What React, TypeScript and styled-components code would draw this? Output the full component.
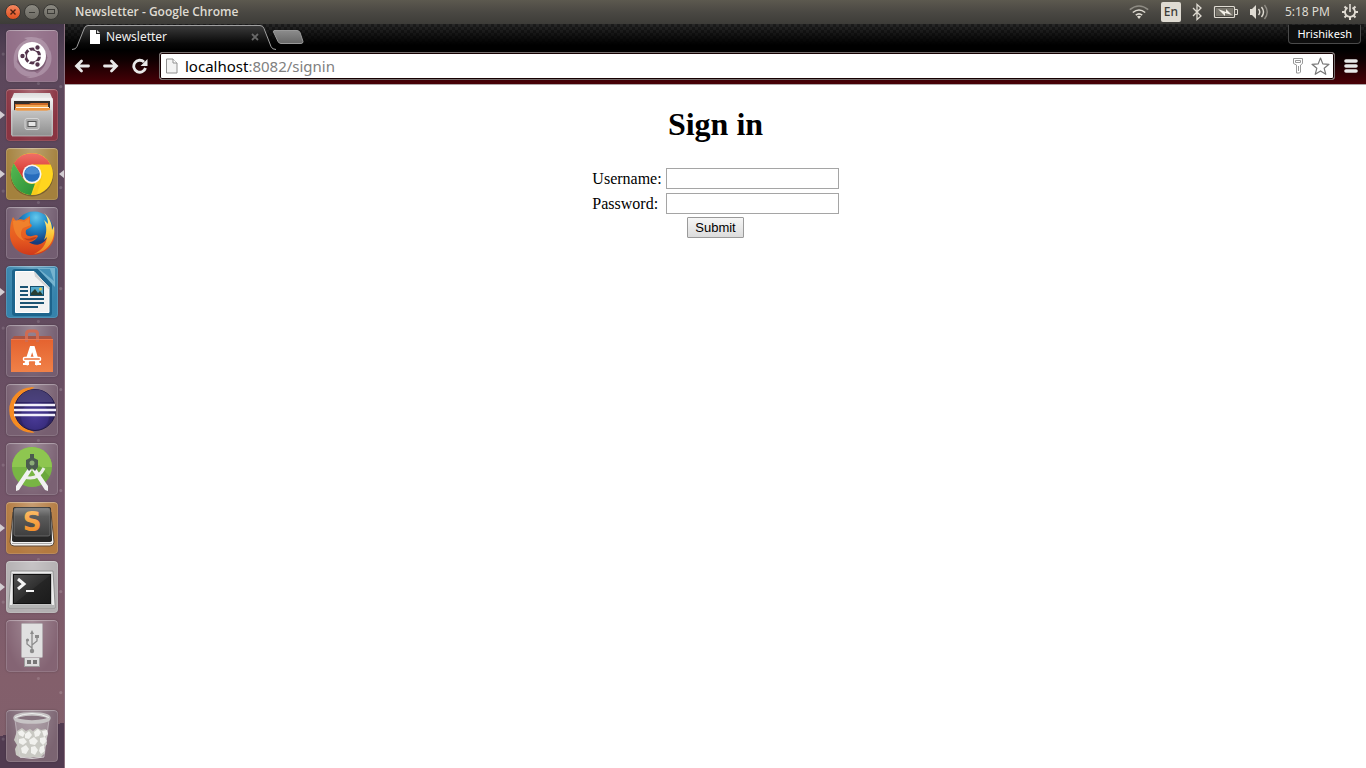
import React from 'react';
import styled, { createGlobalStyle, css } from 'styled-components';

const GlobalStyle = createGlobalStyle`
  * { box-sizing: border-box; }
  body { margin: 0; background: #fff; }
  button { font: inherit; cursor: default; }
`;

const uiFont = css`font-family: 'Noto Sans', 'Open Sans', sans-serif;`;

const Desktop = styled.div`
  display: flex;
  flex-direction: column;
  min-height: 100vh;
`;

/* ---------- top panel ---------- */
const Panel = styled.header`
  ${uiFont}
  display: flex;
  align-items: center;
  height: 24px;
  padding: 0 8px 0 5px;
  color: #dfdbd2;
  font-size: 12px;
  line-height: 16px;
  background: linear-gradient(#5c594f, #4a4843 50%, #3d3c38);
`;

const WindowButtons = styled.div`
  display: flex;
  gap: 3px;
`;

const WindowButton = styled.button<{ $close?: boolean }>`
  display: block;
  width: 16px;
  height: 16px;
  padding: 0;
  border: 1px solid #3a3935;
  border-radius: 50%;
  background: ${p => (p.$close ? 'linear-gradient(#f58860, #e0501f)' : 'linear-gradient(#8c8a82, #6b6962)')};
  svg { display: block; width: 14px; height: 14px; }
`;

const WindowTitle = styled.div`
  flex: 1;
  margin-left: 16px;
  font-family: 'Open Sans', 'Noto Sans', sans-serif;
  font-weight: 600;
  font-size: 12px;
`;

const Indicators = styled.div`
  display: flex;
  align-items: center;
  gap: 10px;
  svg { display: block; }
`;

const Keyboard = styled.span`
  width: 20px;
  height: 20px;
  margin-left: 2px;
  border-radius: 2px;
  background: #dfdbd2;
  color: #3c3b37;
  font-size: 12px;
  font-weight: 500;
  line-height: 20px;
  text-align: center;
`;

const Clock = styled.time`
  margin: 0 2px 0 6px;
  font-size: 12px;
`;

/* ---------- launcher ---------- */
const Workspace = styled.div`
  display: flex;
  flex: 1;
`;

const Launcher = styled.nav`
  display: flex;
  flex-direction: column;
  gap: 7px;
  width: 65px;
  padding: 6px 0;
  border-right: 1px solid #8c7180;
  background:
    radial-gradient(circle at 5% 22%, #ffffff20 1px, transparent 2px) 0 0 / 64px 137px,
    radial-gradient(circle at 95% 62%, #ffffff28 1px, transparent 2px) 0 0 / 64px 101px,
    radial-gradient(circle at 60% 50%, #ffffff20 1px, transparent 2px) 0 0 / 64px 119px,
    linear-gradient(168deg, transparent 94%, #513b50 94%),
    linear-gradient(#44374a, #5c475b 6%, #5f495d 35%, #75566a 65%, #835f6b 88%, #80606c);
`;

const Slot = styled.div<{ $last?: boolean }>`
  display: flex;
  align-items: center;
  ${p => p.$last && 'margin-top: auto;'}
`;

const Pip = styled.span<{ $side: 'left' | 'right'; $on?: boolean }>`
  border: solid transparent;
  border-width: 4px 0;
  ${p => (p.$side === 'left' ? 'border-left: 5px solid' : 'border-right: 5px solid')};
  ${p => (p.$side === 'left' ? 'margin-right: 1px' : 'margin-left: 1px')};
  ${p => (p.$side === 'left' ? 'border-left-color' : 'border-right-color')}: ${p => (p.$on ? '#d3cdd2' : 'transparent')};
`;

const Tile = styled.button<{ $tone: string }>`
  display: block;
  width: 52px;
  height: 52px;
  padding: 0;
  border: 0;
  border-radius: 4px;
  background: radial-gradient(ellipse at 50% 0, #ffffff48, #ffffff08 75%), ${p => p.$tone};
  box-shadow: inset 0 0 0 1px #ffffff20, inset 0 1px 1px #ffffff40, 0 0 2px #0004;
  svg { display: block; width: 52px; height: 52px; }
`;

/* ---------- browser ---------- */
const Browser = styled.main`
  display: flex;
  flex: 1;
  flex-direction: column;
  min-width: 0;
`;

const TabStrip = styled.div`
  ${uiFont}
  display: flex;
  align-items: flex-start;
  height: 26px;
  padding: 1px 5px 0 7px;
  background:
    linear-gradient(#0000, #000 80%),
    repeating-conic-gradient(#282828 0 25%, #1b1b1b 0 50%) 0 0 / 6px 6px;
`;

const Tab = styled.div`
  display: grid;
  width: 204px;
  height: 25px;
  > * { grid-area: 1 / 1; }
`;

const TabContent = styled.div`
  display: flex;
  align-items: center;
  height: 23px;
  padding: 0 17px 0 17px;
  color: #eee;
  font-size: 12px;
  line-height: 16px;
  span { flex: 1; margin-left: 5px; }
`;

const PlainButton = styled.button`
  display: block;
  padding: 0;
  border: 0;
  background: none;
  svg { display: block; }
`;

const NewTab = styled(PlainButton)`
  margin: 4px auto 0 -4px;
`;

const Profile = styled.button`
  ${uiFont}
  && { font-size: 11px; }
  height: 19px;
  padding: 0 8px 1px;
  border: 1px solid #4a4a4a;
  border-top: 0;
  border-radius: 0 0 4px 4px;
  background: #0e0e0e;
  color: #fff;
  line-height: 16px;
`;

const Toolbar = styled.div`
  display: flex;
  align-items: center;
  height: 35px;
  padding: 0 8px 2px 9px;
  gap: 13px;
  border-bottom: 1px solid #aca5a6;
  background: linear-gradient(#000, #100001 30%, #4a0007);
`;

const Omnibox = styled.div`
  ${uiFont}
  display: flex;
  flex: 1;
  align-items: center;
  height: 28px;
  margin: 0 -4px 0 -2px;
  padding: 0 4px 0 5px;
  border: 1px solid #77706f;
  border-radius: 3px;
  background: #fff;
  box-shadow: inset 0 0 0 1px #160102;
`;

const Address = styled.div`
  flex: 1;
  margin-left: 6px;
  color: #808080;
  font-size: 15px;
  line-height: 22px;
  b { color: #000; font-weight: 400; }
`;

const OmniActions = styled.div`
  display: flex;
  align-items: center;
  gap: 7px;
`;

/* ---------- page ---------- */
const Page = styled.section`
  flex: 1;
  background: #fff;
  color: #000;
  font: 16px/18px 'Liberation Serif', serif;
  text-align: center;
`;

const Heading = styled.h1`
  margin: 21px 0 25px;
  font-size: 32px;
  line-height: 37px;
`;

const SignInForm = styled.form`
  display: flex;
  flex-direction: column;
  align-items: center;
  gap: 3px;
`;

const Fields = styled.div`
  display: grid;
  grid-template-columns: auto 173px;
  align-items: center;
  gap: 4px;
  text-align: left;
`;

const TextInput = styled.input`
  width: 100%;
  height: 21px;
  padding: 1px 2px;
  border: 1px solid #a5a5a5;
  border-radius: 0;
  background: #fff;
  font: 13px/16px 'Liberation Sans', sans-serif;
`;

const Submit = styled.button`
  width: 57px;
  height: 21px;
  padding: 0;
  border: 1px solid #9a9a9a;
  border-radius: 1px;
  background: linear-gradient(#f6f6f6, #dcdcdc);
  && { font: 13px/16px 'Liberation Sans', sans-serif; }
  color: #000;
`;

/* ---------- launcher drawings ---------- */
const Dash = () => (
  <svg viewBox="0 0 52 52">
    <rect x="1" y="1" width="50" height="50" rx="3" fill="#94708a" fillOpacity=".7" />
    <path d="M9 39C3 17 18 5 38 9 25 9 14 14 12 26zM18 8c19-5 31 10 25 28-1-13-6-21-18-24zM44 20c6 16-6 29-24 28 10-2 18-8 20-16zM33 45C19 51 6 41 8 27c4 9 10 13 20 14z" fill="#eadfe8" fillOpacity=".28" />
    <circle cx="26" cy="27.500" r="14.500" fill="#4a314650" />
    <circle cx="26" cy="26" r="14" fill="#fff" />
    <circle cx="26.500" cy="26" r="7" fill="none" stroke="#54354d" strokeWidth="3" />
    <path d="M35.500 26h-5M22 18.500l3 4M22 33.500l3-4" stroke="#fff" strokeWidth="1.500" />
    <g fill="#54354d" stroke="#fff" strokeWidth="1.200">
      <circle cx="16.500" cy="26" r="2.800" /><circle cx="31.500" cy="17.500" r="2.800" /><circle cx="31.500" cy="34.500" r="2.800" />
    </g>
  </svg>
);

const Files = () => (
  <svg viewBox="0 0 52 52">
    <defs>
      <linearGradient id="fb" x2="0" y2="1"><stop stopColor="#dcdcdc" /><stop offset=".15" stopColor="#eee" /><stop offset="1" stopColor="#a5a5a5" /></linearGradient>
      <linearGradient id="ff" x2="0" y2="1"><stop stopColor="#c6c6c6" /><stop offset="1" stopColor="#8e8e8e" /></linearGradient>
    </defs>
    <path d="M8 4h36l3 7v35H5V11z" fill="url(#fb)" />
    <path d="M5 10h42" stroke="#fafafa" />
    <path d="M8 12h36v11H8z" fill="#332e2b" />
    <path d="M9 15h14l2-1h17v9H9z" fill="#cb6928" />
    <path d="M10 16h32v2H10z" fill="#f2a650" /><path d="M10 18h33v1H10z" fill="#fff3e2" /><path d="M9 19h35v3H9z" fill="#ee9640" />
    <path d="M7 21l4 1h30l4-1 1 1v25H6V22z" fill="url(#ff)" stroke="#c9c9c9" strokeWidth=".7" />
    <rect x="19" y="29.500" width="14" height="11" rx="2" fill="#aaa" stroke="#d5d5d5" />
    <rect x="22" y="32.500" width="8" height="5" fill="#e5e5e5" stroke="#555" />
  </svg>
);

const Chrome = () => (
  <svg viewBox="0 0 52 52">
    <defs>
      <linearGradient id="cr" x2="0" y2="1"><stop stopColor="#f07067" /><stop offset="1" stopColor="#cf2c26" /></linearGradient>
      <linearGradient id="cg" x2="1" y2="1"><stop stopColor="#56b752" /><stop offset="1" stopColor="#2b9137" /></linearGradient>
    </defs>
    <circle cx="26" cy="27" r="21.500" fill="#0004" />
    <circle cx="26" cy="26" r="21" fill="#ffd51e" />
    <path d="M7.800 15.500A21 21 0 0 1 44.400 16.500H26L17.500 31z" fill="url(#cr)" />
    <path d="M7.800 15.500 17.500 31A10 10 0 0 0 29 35.500L25 47A21 21 0 0 1 7.800 15.500" fill="url(#cg)" />
    <path d="M34 31l-9 16q3 0 6-1l6-20z" fill="#e9b813" fillOpacity=".35" />
    <circle cx="26" cy="26" r="9.500" fill="#f5f5f5" /><circle cx="26" cy="26" r="7.800" fill="#286dbd" />
    <path d="M18.700 25a7.400 7.400 0 0 1 14.600 0q-7 3-14.600 0" fill="#4a8bd0" />
  </svg>
);

const Firefox = () => (
  <svg viewBox="0 0 52 52">
    <defs>
      <radialGradient id="fg" cx=".55" cy=".15" r=".8"><stop stopColor="#64c8ec" /><stop offset=".35" stopColor="#218ccb" /><stop offset=".8" stopColor="#153c7e" /></radialGradient>
      <linearGradient id="fx" x2="0" y2="1"><stop stopColor="#ed7425" /><stop offset=".6" stopColor="#e65a20" /><stop offset="1" stopColor="#cf3a1b" /></linearGradient>
      <linearGradient id="fy" x2="0" y2="1"><stop stopColor="#fff6a6" /><stop offset=".5" stopColor="#fbc83a" /><stop offset="1" stopColor="#ee7925" /></linearGradient>
    </defs>
    <circle cx="28" cy="24" r="19.500" fill="url(#fg)" />
    <path d="M7 10l3 4c3-2 5-2 8-1l6-4v7c1 2 3 2 1 4l-5 3c-1 4 1 7 6 6 2 0 4-2 6 0-2 4-6 6-9 6 6 5 14 3 18-4l3-2 4-6c3 13-8 25-22 25C12 48 3 38 4 25 4 19 5 14 7 10z" fill="url(#fx)" />
    <path d="M38 6c6 5 8 11 8 17l2-4c2 14-6 26-20 28 8-4 12-9 13-17l-3 3c3-8 3-13 0-20l4 4c0-4-1-8-4-11z" fill="url(#fy)" />
    <path d="M7 14c4-1 9 0 11 1l5-4v5l2 2-8 3c-3 4-3 9 2 13-9-3-12-11-12-20z" fill="#f28a31" fillOpacity=".7" />
    <path d="M18 31c5 2 8-1 13-1-3 4-9 5-13 1z" fill="#b8401e" />
  </svg>
);

const Writer = () => (
  <svg viewBox="0 0 52 52">
    <rect x="6" y="3" width="40" height="47" rx="3" fill="#1d648c" />
    <path d="M31 2h18v19z" fill="#75b3cf" /><path d="M33 3h11l4 12z" fill="#438fb6" />
    <path d="M9.500 5.500H28l15 16v25H9.500z" fill="#f2f2f2" stroke="#fff" /><path d="M28 5.500l1 5 14 13v-2z" fill="#d2d2d2" />
    <g stroke="#1b5373" strokeWidth="2"><path d="M14 21h8M14 25h8M14 29h8M14 33h24M14 37h24M14 41h18" /></g>
    <rect x="24" y="20" width="14" height="10" fill="#15506f" /><rect x="25" y="21" width="12" height="8" fill="#56aacb" />
    <path d="M25 29v-2l4-4 3 4 2-2 3 4z" fill="#283e32" /><circle cx="34.500" cy="23" r="1.500" fill="#e1c64b" />
  </svg>
);

const Software = () => (
  <svg viewBox="0 0 52 52">
    <defs><linearGradient id="sw" x2="0" y2="1"><stop stopColor="#e4622f" /><stop offset="1" stopColor="#f08148" /></linearGradient></defs>
    <path d="M8 11h37l2 4H5z" fill="#a95543" /><path d="M5 14h42v33H5z" fill="url(#sw)" />
    <path d="M20.500 17V9q0-3 3-3h5q3 0 3 3v8" fill="none" stroke="#cf6b52" strokeWidth="3" />
    <path d="M5 14.500h42" stroke="#eb7950" />
    <path d="M20 40l5.500-17h1.500L32 40" fill="none" stroke="#fff" strokeWidth="4" />
    <path d="M17 39h6M29 39h6" stroke="#fff" strokeWidth="2" />
    <rect x="17.500" y="32.500" width="17" height="3" rx="1" fill="#ed7039" stroke="#fff" strokeWidth="1.400" />
  </svg>
);

const Eclipse = () => (
  <svg viewBox="0 0 52 52">
    <defs><radialGradient id="ec" cx=".5" cy=".65" r=".65"><stop stopColor="#4b3c99" /><stop offset=".5" stopColor="#3a2e80" /><stop offset=".55" stopColor="#30256a" /><stop offset="1" stopColor="#251c50" /></radialGradient></defs>
    <path d="M26 4A22 22 0 0 0 26 48 26 26 0 0 1 26 4z" fill="#f58b22" stroke="#f58b22" strokeWidth="1.500" />
    <circle cx="29" cy="26" r="20.500" fill="url(#ec)" stroke="#201849" />
    <path d="M10.500 18a20 20 0 0 1 37 0z" fill="#655d91" fillOpacity=".5" />
    <path d="M8 21h41M8 26h42M8 31h41" stroke="#f1effa" strokeWidth="2.600" />
  </svg>
);

const Studio = () => (
  <svg viewBox="0 0 52 52">
    <circle cx="26" cy="24" r="20" fill="#78b544" /><path d="M6 24a20 20 0 0 1 40 0z" fill="#8ec650" />
    <path d="M28 26l9 16 7-8-11-12z" fill="#4f8d2b" fillOpacity=".35" />
    <path d="M18 34q14 4 20-9" fill="none" stroke="#eceee9" strokeWidth="3" />
    <path d="M23 24 10 43v5l3-1 13-20zM29 24l13 19v5l-3-1-13-20z" fill="#f1f1f1" />
    <path d="M24 11h4v4l4 2v7l-3 4-3-3-3 3-3-4v-7l4-2z" fill="#4b5a4f" /><circle cx="26" cy="20" r="2.500" fill="#8cac78" />
  </svg>
);

const SublimeMark = styled.text`
  font: 700 26px 'DejaVu Sans', sans-serif;
`;

const Sublime = () => (
  <svg viewBox="0 0 52 52">
    <defs>
      <linearGradient id="sb" x2="0" y2="1"><stop stopColor="#888" /><stop offset=".3" stopColor="#5c5c5c" /><stop offset="1" stopColor="#3e3e3e" /></linearGradient>
      <linearGradient id="so" x2="0" y2="1"><stop stopColor="#ffc46f" /><stop offset="1" stopColor="#ee811a" /></linearGradient>
    </defs>
    <path d="M7 10h38l3 30q0 4-4 4H8q-4 0-4-4z" fill="#f2f2f2" stroke="#5e4936" /><path d="M6 41h40v1H6z" fill="#a9a9a9" />
    <path d="M9 5h34q2 0 2 2l1 31q0 2-3 2H9q-3 0-3-2L7 7q0-2 2-2z" fill="#262626" />
    <rect x="8" y="6" width="36" height="28" rx="2" fill="url(#sb)" stroke="#797979" strokeWidth=".7" />
    <SublimeMark x="26" y="29" textAnchor="middle" fill="url(#so)">S</SublimeMark>
  </svg>
);

const Terminal = () => (
  <svg viewBox="0 0 52 52">
    <defs><linearGradient id="tm" x2="1" y2="1"><stop stopColor="#525252" /><stop offset=".5" stopColor="#303030" /><stop offset=".52" stopColor="#252525" /><stop offset="1" stopColor="#1b1b1b" /></linearGradient></defs>
    <path d="M5 10h42l2 33v4H3v-4z" fill="#ececec" stroke="#909090" /><path d="M3.500 44h45v3h-45z" fill="#b4b4b4" />
    <rect x="6" y="12" width="40" height="32" fill="#c5c5c5" /><rect x="7.500" y="13.500" width="37" height="29" fill="url(#tm)" stroke="#111" />
    <path d="M12 18l6 5-6 5" fill="none" stroke="#f4f4f4" strokeWidth="3" /><path d="M20 30h8" stroke="#f4f4f4" strokeWidth="2" />
  </svg>
);

const Usb = () => (
  <svg viewBox="0 0 52 52">
    <rect x="18.500" y="37.500" width="15" height="9" fill="#ddd" stroke="#9b9b9b" /><path d="M21 40h4v4h-4zM27 40h4v4h-4z" fill="#777" />
    <rect x="15.500" y="3.500" width="21" height="34" rx="1" fill="#e0e0e0" stroke="#b5aeb2" />
    <g fill="none" stroke="#8b8b8b" strokeWidth="1.300"><path d="M26 13v17M26 28l-5-4v-4M26 25l5-4v-4" /></g>
    <path d="M26 10l2 4h-4zM29 15h4v3h-4z" fill="#8b8b8b" /><circle cx="21.500" cy="20" r="1.600" fill="#8b8b8b" /><circle cx="26" cy="31" r="2.200" fill="#8b8b8b" />
  </svg>
);

const Trash = () => (
  <svg viewBox="0 0 52 52">
    <path d="M9 9l5 38q12 3 24 0l5-38z" fill="#e5e3e4" fillOpacity=".25" />
    <path d="M11 21l5-3 4 3 4-2 3 2 4-3 4 2 5-1 2 5-2 6 1 4-3 4 1 5-5 5-6-1-4 1-5-1-4 1-5-3-1-6 2-4-3-5z" fill="#c9c9c3" />
    <path d="M12 22l4-2 3 3-2 4-4-2zM19 24l4-3 3 4-3 4-4-1zM28 22l4-3 3 3-2 4-4 1zM36 21l5-1 1 4-4 3zM13 29l5-1 3 4-4 3-4-2zM23 30l5-3 4 4-3 4-5-1zM34 28l5-1 2 4-4 4-3-3zM15 38l5-3 3 4-3 5-4-1zM25 37l4-1 3 4-3 5-4-2zM34 37l4-2 1 6-4 3-2-3z" fill="#f1f1ee" />
    <path d="M9 10l5 37M43 10l-5 37" stroke="#d7d2d5" strokeOpacity=".6" />
    <path d="M14 47q12 3 24 0" fill="none" stroke="#d7d2d5" />
    <ellipse cx="26" cy="8" rx="17" ry="4" fill="#85717d" stroke="#c7c4c5" strokeWidth="3.500" />
    <path d="M9 7.500q8-4 17-4t17 4" fill="none" stroke="#eee" />
  </svg>
);

type LauncherApp = { name: string; tone: string; icon: () => React.JSX.Element; running?: boolean; active?: boolean };

const apps: LauncherApp[] = [
  { name: 'Dash', tone: '#84637b', icon: Dash },
  { name: 'Files', tone: '#862e3c', icon: Files, running: true },
  { name: 'Chrome', tone: '#a17d37', icon: Chrome, running: true, active: true },
  { name: 'Firefox', tone: '#6e586c', icon: Firefox },
  { name: 'Writer', tone: '#2f7fa9', icon: Writer, running: true },
  { name: 'Software Center', tone: '#70586b', icon: Software },
  { name: 'Eclipse', tone: '#735a6c', icon: Eclipse },
  { name: 'Android Studio', tone: '#775d6f', icon: Studio },
  { name: 'Sublime Text', tone: '#b1763a', icon: Sublime, running: true },
  { name: 'Terminal', tone: '#b1adaf', icon: Terminal, running: true },
  { name: 'USB drive', tone: '#805f6f', icon: Usb },
  { name: 'Trash', tone: '#775f6d', icon: Trash },
];

const TabPageIcon = () => (
  <svg width="12" height="16" viewBox="0 0 12 16">
    <path d="M1 1h6v4h4v10H1z" fill="#fff" /><path d="M8 1l3 3H8z" fill="#ddd" />
  </svg>
);

const AddressPageIcon = () => (
  <svg width="14" height="16" viewBox="0 0 14 16">
    <path d="M1.500 1h6.500l4 4v10H1.500z" fill="#f3f3f3" stroke="#919191" /><path d="M8 1v4h4" fill="#fff" stroke="#919191" />
  </svg>
);

export default function App() {
  return (
    <Desktop>
      <GlobalStyle />
      <Panel>
        <WindowButtons>
          <WindowButton $close aria-label="Close window"><svg viewBox="0 0 14 14"><path d="M4.500 4.500l5 5m0-5l-5 5" stroke="#4c2012" strokeWidth="1.400" /></svg></WindowButton>
          <WindowButton aria-label="Minimize window"><svg viewBox="0 0 14 14"><path d="M4 7.500h6" stroke="#3c3b37" /></svg></WindowButton>
          <WindowButton aria-label="Maximize window"><svg viewBox="0 0 14 14"><rect x="3.500" y="4.500" width="7" height="4" fill="none" stroke="#3c3b37" /></svg></WindowButton>
        </WindowButtons>
        <WindowTitle>Newsletter - Google Chrome</WindowTitle>
        <Indicators>
          <svg width="20" height="14" viewBox="0 0 20 14" fill="none" stroke="#dfdbd2" strokeWidth="1.600">
            <path d="M.8 4.700q9.200-7.400 18.400 0" stroke="#8f8c84" /><path d="M3.800 7.500q6.200-5 12.400 0M6.800 10.200q3.200-2.600 6.400 0" /><path d="M8 11.500q2-1.500 4 0l-2 2.500z" fill="#dfdbd2" stroke="none" />
          </svg>
          <Keyboard>En</Keyboard>
          <svg width="12" height="18" viewBox="0 0 12 18" fill="none" stroke="#dfdbd2" strokeWidth="1.300"><path d="M2 5l8 8-4 3.500v-15L10 5l-8 8" /></svg>
          <svg width="26" height="14" viewBox="0 0 26 14">
            <rect x="1.500" y="1.500" width="20" height="11" rx="1" fill="none" stroke="#dfdbd2" strokeWidth="1.200" /><path d="M22 4.500h2.500v5H22" fill="none" stroke="#dfdbd2" /><path d="M3 3h17v8H3z" fill="#77746b" /><path d="M5 4l8 3V4l6 6-7-2v3z" fill="#f3f0e8" />
          </svg>
          <svg width="20" height="16" viewBox="12 0 20 16"><path d="M13 5h2l4-4v14l-4-4h-2z" fill="#dfdbd2" /><g fill="none" stroke="#dfdbd2" strokeWidth="1.400"><path d="M21.500 5q2.500 3 0 6M24.500 3q4 5 0 10" /><path d="M27.500 1q5.500 7 0 14" stroke="#8f8c84" /></g></svg>
          <Clock>5:18 PM</Clock>
          <svg width="16" height="16" viewBox="0 0 16 16" fill="none" stroke="#dfdbd2"><path d="M5.500 3.600a5 5 0 1 0 5 0" strokeWidth="1.800" /><path d="M8 0v8" strokeWidth="1.600" /><path d="M2.500 2.500l2 2M13.500 2.500l-2 2M0 8h3M13 8h3M2.500 13.500l2-2M13.500 13.500l-2-2M8 13v3" strokeWidth="2" /></svg>
        </Indicators>
      </Panel>
      <Workspace>
        <Launcher aria-label="Launcher">
          {apps.map(({ name, tone, icon: Icon, running, active }) => (
            <Slot key={name} $last={name === 'Trash'}>
              <Pip $side="left" $on={running} />
              <Tile $tone={tone} aria-label={name}><Icon /></Tile>
              <Pip $side="right" $on={active} />
            </Slot>
          ))}
        </Launcher>
        <Browser>
          <TabStrip>
            <Tab>
              <svg width="204" height="25" viewBox="0 0 204 25">
                <defs><linearGradient id="tab" x2="0" y2="1"><stop stopColor="#3c3c3c" /><stop offset=".75" stopColor="#080808" /><stop offset="1" stopColor="#000" /></linearGradient></defs>
                <path d="M0 24.500q4 0 5-3L12 4Q13 .5 16 .5h172q3 0 4 3l7 18q1 3 5 3" fill="url(#tab)" stroke="#a0a0a0" />
              </svg>
              <TabContent>
                <TabPageIcon /><span>Newsletter</span>
                <PlainButton aria-label="Close tab"><svg width="8" height="8" viewBox="0 0 8 8"><path d="M1 1l6 6m0-6L1 7" stroke="#686868" strokeWidth="1.800" /></svg></PlainButton>
              </TabContent>
            </Tab>
            <NewTab aria-label="New tab">
              <svg width="32" height="16" viewBox="0 0 32 16">
                <defs><linearGradient id="nt" x2="0" y2="1"><stop stopColor="#8c8c8c" /><stop offset="1" stopColor="#666" /></linearGradient></defs>
                <path d="M2 1.500h23q2 0 3 2l3 9q0 2-2 2H9q-2 0-3-2L1.500 3q0-1.500.5-1.500z" fill="url(#nt)" stroke="#999" />
              </svg>
            </NewTab>
            <Profile>Hrishikesh</Profile>
          </TabStrip>
          <Toolbar>
            <PlainButton aria-label="Back"><svg width="16" height="16" viewBox="0 0 16 16" fill="none" stroke="#e8e8e8" strokeWidth="2.800" strokeLinecap="round"><path d="M14.500 8H3M7.500 3l-5 5 5 5" /></svg></PlainButton>
            <PlainButton aria-label="Forward"><svg width="16" height="16" viewBox="0 0 16 16" fill="none" stroke="#e8e8e8" strokeWidth="2.800" strokeLinecap="round"><path d="M1.500 8H13M8.500 3l5 5-5 5" /></svg></PlainButton>
            <PlainButton aria-label="Reload"><svg width="16" height="16" viewBox="0 0 16 16"><path d="M12 4A6 6 0 1 0 13.500 10" fill="none" stroke="#e8e8e8" strokeWidth="2.800" /><path d="M15.500 1v7H8.500z" fill="#e8e8e8" /></svg></PlainButton>
            <Omnibox>
              <AddressPageIcon />
              <Address><b>localhost</b>:8082/signin</Address>
              <OmniActions>
                <PlainButton aria-label="Saved password"><svg width="12" height="16" viewBox="0 0 12 16" fill="none" stroke="#999"><path d="M1.500.5h9v5l-2 1.500v7l-1 1h-3v-8l-3-1.500z" /><path d="M3.500 2.500h5v2h-5zM6.500 8v5" /></svg></PlainButton>
                <PlainButton aria-label="Bookmark"><svg width="19" height="18" viewBox="0 0 19 18"><path d="M9.500 1l2.300 5.900 6.200.4-4.800 4 1.600 6-5.300-3.400-5.300 3.400 1.600-6L1 7.300l6.200-.4z" fill="#fff" stroke="#777" strokeWidth="1.200" strokeLinejoin="round" /></svg></PlainButton>
              </OmniActions>
            </Omnibox>
            <PlainButton aria-label="Menu"><svg width="14" height="14" viewBox="0 0 14 14"><path d="M2 2h10M2 7h10M2 12h10" stroke="#e8e8e8" strokeWidth="3.600" strokeLinecap="round" /></svg></PlainButton>
          </Toolbar>
          <Page>
            <Heading>Sign in</Heading>
            <SignInForm onSubmit={e => e.preventDefault()}>
              <Fields>
                <label htmlFor="username">Username:</label>
                <TextInput id="username" type="text" />
                <label htmlFor="password">Password:</label>
                <TextInput id="password" type="password" />
              </Fields>
              <Submit type="submit">Submit</Submit>
            </SignInForm>
          </Page>
        </Browser>
      </Workspace>
    </Desktop>
  );
}
